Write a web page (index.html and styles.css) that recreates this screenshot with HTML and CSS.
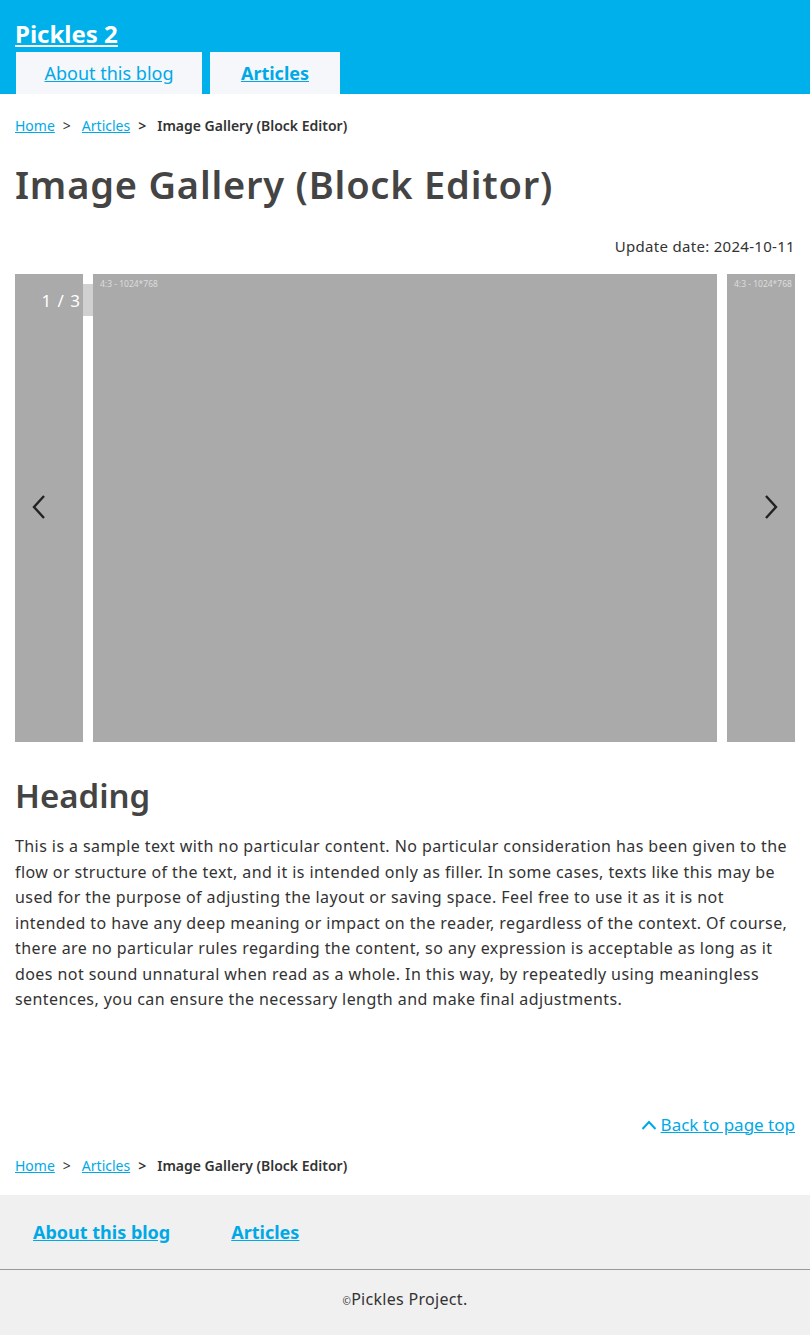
FILE: index.html
```html
<!DOCTYPE html>
<html lang="en">
<head>
<meta charset="utf-8">
<title>Image Gallery (Block Editor)</title>
<link rel="stylesheet" href="styles.css">
</head>
<body>
<header class="site-header">
  <div class="site-title"><a href="#">Pickles 2</a></div>
  <nav class="global-nav">
    <a class="nav-tab" href="#">About this blog</a>
    <a class="nav-tab nav-tab--current" href="#">Articles</a>
  </nav>
</header>

<main class="contents">
  <ul class="breadcrumb">
    <li><a href="#">Home</a></li>
    <li><a href="#">Articles</a></li>
    <li class="breadcrumb-current">Image Gallery (Block Editor)</li>
  </ul>

  <h1 class="page-title">Image Gallery (Block Editor)</h1>

  <p class="update-date">Update date: 2024-10-11</p>

  <div class="gallery">
    <div class="slide slide--prev"></div>
    <div class="slide slide--main"><span class="slide-label">4:3 - 1024*768</span></div>
    <div class="slide slide--next"><span class="slide-label">4:3 - 1024*768</span></div>
    <div class="gallery-counter">1 / 3</div>
    <button class="gallery-arrow gallery-arrow--prev" aria-label="Previous">
      <svg width="16" height="26" viewBox="0 0 16 26"><path d="M13 2 L3 13 L13 24" fill="none" stroke="#222" stroke-width="2.4"/></svg>
    </button>
    <button class="gallery-arrow gallery-arrow--next" aria-label="Next">
      <svg width="16" height="26" viewBox="0 0 16 26"><path d="M3 2 L13 13 L3 24" fill="none" stroke="#222" stroke-width="2.4"/></svg>
    </button>
  </div>

  <h2 class="section-heading">Heading</h2>
  <p class="body-text">This is a sample text with no particular content. No particular consideration has been given to the flow or structure of the text, and it is intended only as filler. In some cases, texts like this may be used for the purpose of adjusting the layout or saving space. Feel free to use it as it is not intended to have any deep meaning or impact on the reader, regardless of the context. Of course, there are no particular rules regarding the content, so any expression is acceptable as long as it does not sound unnatural when read as a whole. In this way, by repeatedly using meaningless sentences, you can ensure the necessary length and make final adjustments.</p>

  <div class="back-to-top">
    <a href="#"><svg class="back-icon" width="16" height="12" viewBox="0 0 16 12"><path d="M1.5 10 L8 3 L14.5 10" fill="none" stroke="#00a9e6" stroke-width="2"/></svg>Back to page top</a>
  </div>

  <ul class="breadcrumb breadcrumb--bottom">
    <li><a href="#">Home</a></li>
    <li><a href="#">Articles</a></li>
    <li class="breadcrumb-current">Image Gallery (Block Editor)</li>
  </ul>
</main>

<footer class="site-footer">
  <nav class="footer-nav">
    <a href="#">About this blog</a>
    <a href="#">Articles</a>
  </nav>
  <div class="copyright"><small>©</small>Pickles Project.</div>
</footer>
</body>
</html>
```

FILE: styles.css
```css
* { box-sizing: border-box; }
html, body { margin: 0; padding: 0; }
body {
  font-family: "Noto Sans", "Liberation Sans", Arial, sans-serif;
  color: #333;
  background: #fff;
}
a { color: #00a9e6; }

.site-header {
  background: #00b0ea;
  height: 94px;
  padding: 18px 15px 0;
  display: flex;
  flex-direction: column;
}
.site-title {
  font-size: 24px;
  font-weight: bold;
  line-height: 32px;
}
.site-title a { color: #fff; }
.global-nav {
  display: flex;
  gap: 8px;
  margin-top: 2px;
  padding-left: 1px;
}
.nav-tab {
  display: flex;
  align-items: center;
  justify-content: center;
  height: 42px;
  background: #f5f7fb;
  font-size: 18px;
  color: #00a9e6;
}
.nav-tab:first-child { width: 186px; }
.nav-tab--current { width: 130px; font-weight: bold; }

.contents { padding: 0 15px; }

.breadcrumb {
  list-style: none;
  margin: 0;
  padding: 22px 0 0;
  display: flex;
  font-size: 14px;
  line-height: 20px;
}
.breadcrumb li { display: flex; }
.breadcrumb li + li::before {
  content: ">";
  color: #333;
  padding: 0 11px 0 8px;
}
.breadcrumb-current { font-weight: 600; color: #333; }

.page-title {
  margin: 23px 0 0;
  font-size: 38px;
  line-height: 50px;
  font-weight: 600;
  letter-spacing: 0.8px;
  color: #444;
}

.update-date {
  text-align: right;
  margin: 27px 0 0;
  font-size: 15px;
  line-height: 20px;
  letter-spacing: 0.3px;
}

.gallery {
  position: relative;
  margin-top: 18px;
  height: 468px;
  display: grid;
  grid-template-columns: 68px 624px 68px;
  gap: 10px;
}
.slide {
  background: #aaa;
  height: 468px;
  overflow: hidden;
  padding: 4px 7px;
}
.slide-label {
  display: block;
  font-size: 8.5px;
  color: #ddd;
  white-space: nowrap;
}
.gallery-counter {
  position: absolute;
  top: 10px;
  left: 0;
  width: 78px;
  height: 32px;
  padding-right: 12px;
  display: flex;
  align-items: center;
  justify-content: flex-end;
  background: rgba(170, 170, 170, 0.55);
  color: #fff;
  font-size: 17px;
  letter-spacing: 1px;
}
.gallery-arrow {
  position: absolute;
  top: 218px;
  width: 30px;
  height: 30px;
  border: 0;
  padding: 0;
  background: transparent;
  display: flex;
  align-items: center;
  justify-content: center;
}
.gallery-arrow--prev { left: 9px; }
.gallery-arrow--next { right: 9px; }

.section-heading {
  margin: 32px 0 0;
  font-size: 33px;
  line-height: 44px;
  font-weight: 600;
  color: #444;
}
.body-text {
  margin: 16px 0 0;
  font-size: 16px;
  line-height: 25.5px;
  letter-spacing: 0.42px;
  color: #333;
}

.back-to-top {
  margin-top: 100px;
  text-align: right;
  font-size: 17px;
  line-height: 24px;
}
.back-to-top a { display: inline-flex; align-items: center; }
.back-icon { margin-right: 4px; }

.breadcrumb--bottom { padding-top: 19px; padding-bottom: 19px; }

.site-footer { background: #f0f0f0; }
.footer-nav {
  display: flex;
  gap: 61px;
  padding: 25px 33px 24px;
  font-size: 18px;
  font-weight: bold;
  line-height: 25px;
  border-bottom: 1px solid #999;
}
.copyright {
  text-align: center;
  font-size: 16px;
  line-height: 22px;
  padding: 18px 0 25px;
  letter-spacing: 0.3px;
  color: #333;
}
.copyright small { font-size: 10px; }
```
